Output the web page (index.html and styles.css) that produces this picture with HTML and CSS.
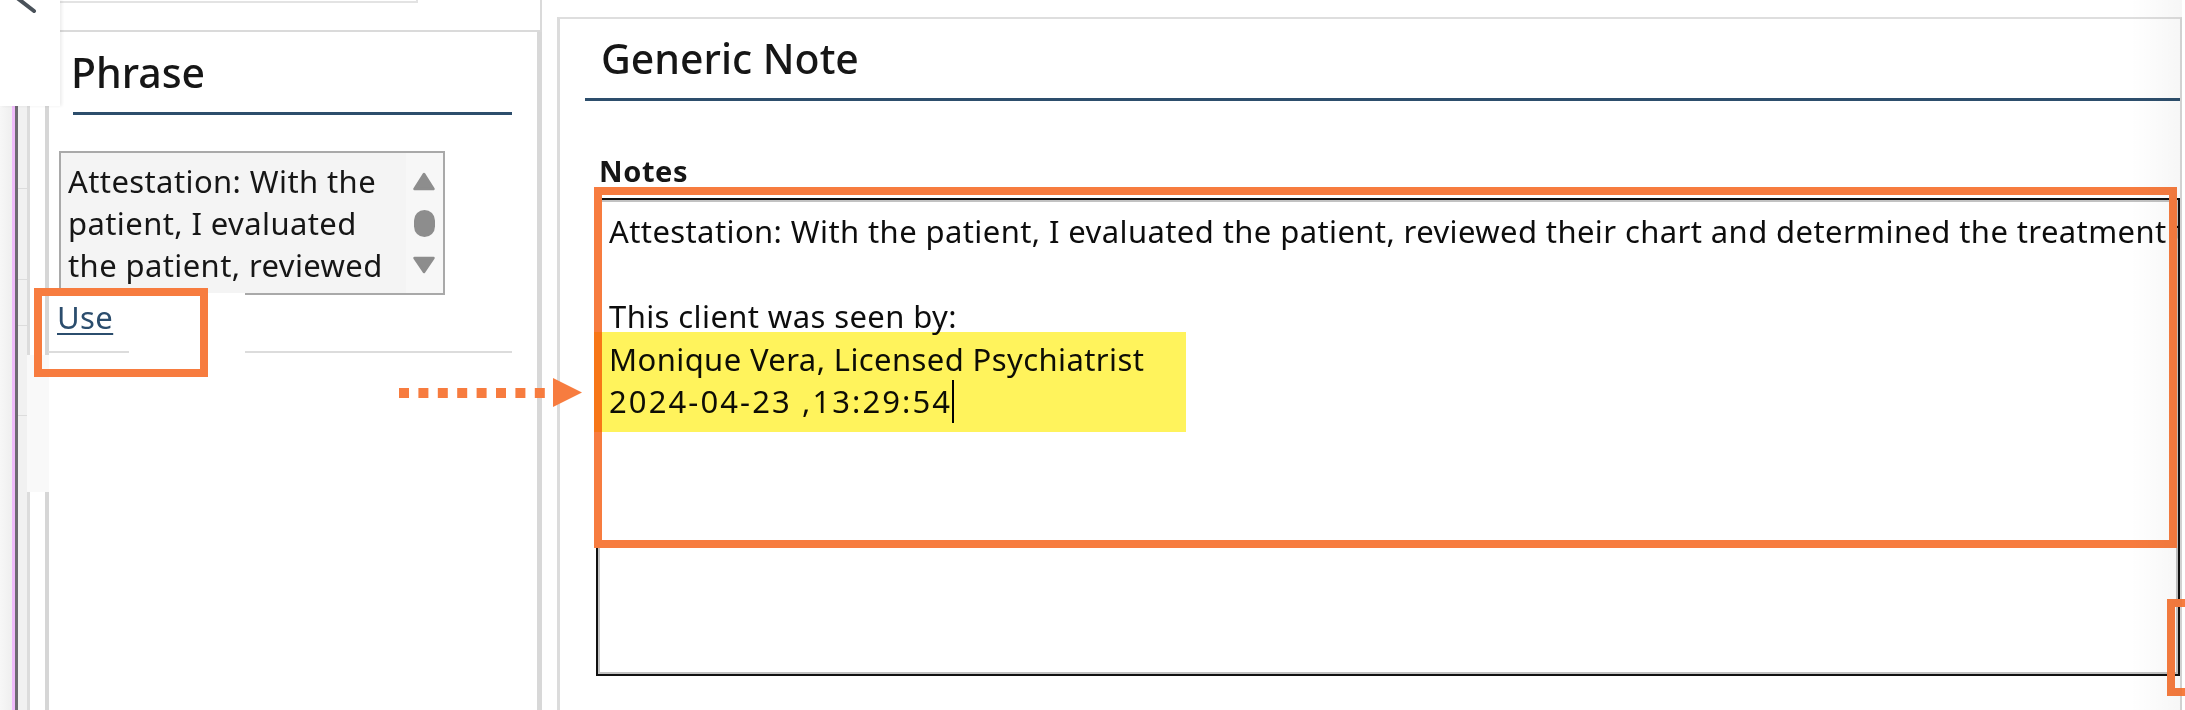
FILE: index.html
```html
<!DOCTYPE html>
<html lang="en">
<head>
<meta charset="utf-8">
<title>Generic Note</title>
<link rel="stylesheet" href="styles.css">
</head>
<body>
<div class="app">
  <div class="rail">
    <div class="rail-cell c1"></div>
    <div class="rail-cell c2"></div>
    <div class="rail-cell c3"></div>
    <div class="rail-cell c4"></div>
    <div class="rail-cell c5"></div>
  </div>
  <aside class="sidebar">
    <div class="topstrip"><div class="topbox"></div></div>
    <div class="phrase-panel">
      <div class="gutter">
        <div class="gut gut-a"></div>
        <div class="gut gut-b"></div>
        <div class="gut gut-c"></div>
      </div>
      <div class="phrase-content">
        <h2 class="phrase-title">Phrase</h2>
        <div class="phrase-box">
          <div class="phrase-text">Attestation: With the patient, I evaluated the patient, reviewed their chart and determined the treatment</div>
          <div class="phrase-scroll">
            <svg width="37" height="140" viewBox="0 0 37 140">
              <path d="M18 21 L27.5 36 L8.5 36 Z" fill="#8d8d8d" stroke="#8d8d8d" stroke-width="2.5" stroke-linejoin="round"/>
              <rect x="8" y="57" width="21" height="27" rx="10.5" fill="#8d8d8d"/>
              <path d="M8.5 105 L27.5 105 L18 119 Z" fill="#8d8d8d" stroke="#8d8d8d" stroke-width="2.5" stroke-linejoin="round"/>
            </svg>
          </div>
        </div>
        <div class="phrase-actions"><a class="use-link" href="#">Use</a></div>
      </div>
    </div>
  </aside>
  <main class="note-panel">
    <h1 class="note-title">Generic Note</h1>
    <label class="notes-label">Notes</label>
    <div class="notes-box">
      <div class="ln">Attestation: With the patient, I evaluated the patient, reviewed their chart and determined the treatment to be appropriate.</div>
      <div class="ln"></div>
      <div class="ln">This client was seen by:</div>
      <div class="ln">Monique Vera, Licensed Psychiatrist</div>
      <div class="ln"><span class="ts">2024-04-23 ,13:29:54</span><span class="caret"></span></div>
    </div>
  </main>
</div>

<div class="collapse-btn">
  <svg width="60" height="106" viewBox="0 0 60 106">
    <path d="M12 -6 L34 11" stroke="#4a525a" stroke-width="4" stroke-linecap="round" fill="none"/>
  </svg>
</div>
<div class="mask"></div>
<div class="anno anno-use"></div>
<div class="anno anno-notes"></div>
<div class="anno anno-corner"></div>
<svg class="arrow" width="184" height="30" viewBox="0 0 184 30">
  <g fill="#f77c3f">
    <rect x="0" y="10" width="10" height="10"/>
    <rect x="19.4" y="10" width="10" height="10"/>
    <rect x="38.8" y="10" width="10" height="10"/>
    <rect x="58.2" y="10" width="10" height="10"/>
    <rect x="77.6" y="10" width="10" height="10"/>
    <rect x="97" y="10" width="10" height="10"/>
    <rect x="116.4" y="10" width="10" height="10"/>
    <rect x="135.8" y="10" width="10" height="10"/>
    <path d="M154 0 L183 14.5 L154 29 Z"/>
  </g>
</svg>
<div class="hl"></div>
<div class="edge-shade"></div>
</body>
</html>
```

FILE: styles.css
```css
* { box-sizing: border-box; }

body {
  margin: 0;
  width: 2185px;
  height: 710px;
  overflow: hidden;
  background: #fff;
  position: relative;
  font-family: "Noto Sans", "Open Sans", sans-serif;
  color: #161616;
}

.app {
  display: flex;
  height: 710px;
}

/* left rail */
.rail {
  width: 27px;
  flex: none;
  display: flex;
  flex-direction: column;
  background: linear-gradient(to right, #f7f7f7 0, #efefef 12px, #efbafb 12px, #efbafb 15px, #6e6a72 15px, #6e6a72 18px, #f1f1f1 18px);
}
.rail-cell { margin-left: 18px; border-top: 1px solid #dcdcdc; }
.c1 { height: 188px; border-top: 0; }
.c2 { height: 91px; }
.c3 { height: 46px; }
.c4 { height: 90px; }
.c5 { flex: 1; }

/* sidebar */
.sidebar {
  width: 515px;
  flex: none;
  display: flex;
  flex-direction: column;
}
.topstrip {
  height: 32px;
  flex: none;
  border-bottom: 2px solid #dadada;
  border-right: 2px solid #dadada;
}
.topbox {
  width: 391px;
  height: 3px;
  border-bottom: 2px solid #e3e3e3;
  border-right: 2px solid #e3e3e3;
}
.phrase-panel {
  flex: 1;
  display: flex;
  border-right: 5px solid #d8d8d8;
}
.gutter {
  width: 22px;
  flex: none;
  display: flex;
  flex-direction: column;
}
.gut {
  border-left: 3px solid #dcdcdc;
  border-right: 4px solid #d6d6d6;
  background: #fff;
}
.gut-a { height: 323px; }
.gut-b { height: 137px; background: #f9f9f9; border-color: transparent; }
.gut-c { flex: 1; }

.phrase-content {
  flex: 1;
  min-width: 0;
  padding-top: 15px;
}
.phrase-title {
  margin: 0 25px 0 24px;
  font-size: 41px;
  font-weight: 500;
  line-height: 50px;
  padding-bottom: 15px;
  border-bottom: 3px solid #2d4e6c;
  text-indent: -2px;
}
.phrase-box {
  margin: 36px 0 0 10px;
  width: 386px;
  height: 144px;
  border: 2px solid #a9a9a9;
  background: #f4f4f4;
  display: flex;
}
.phrase-text {
  flex: 1;
  min-width: 0;
  padding: 7px 0 0 7px;
  font-size: 31px;
  line-height: 42px;
  letter-spacing: 0.4px;
  overflow: hidden;
}
.phrase-scroll {
  width: 37px;
  flex: none;
  background: #f7f7f7;
}
.phrase-scroll svg { display: block; }

.phrase-actions {
  margin: 0 25px 0 -1px;
  padding: 1px 0 13px 9px;
  border-bottom: 2px solid #dcdcdc;
  font-size: 31px;
  line-height: 42px;
}
.use-link {
  color: #2b4d6d;
  letter-spacing: 0.4px;
  text-decoration: underline;
  text-decoration-thickness: 2px;
  text-underline-offset: 4px;
}

/* note panel */
.note-panel {
  flex: 1;
  min-width: 0;
  margin: 17px 3px 0 15px;
  border-top: 2px solid #dedede;
  border-left: 3px solid #dcdcdc;
  border-right: 2px solid #d8d8d8;
  padding: 14px 0 0 25px;
}
.note-title {
  margin: 0;
  font-size: 41px;
  font-weight: 500;
  line-height: 50px;
  padding: 0 0 15px 16px;
  border-bottom: 3px solid #2d4e6c;
}
.notes-label {
  display: block;
  margin: 52px 0 0 14px;
  font-size: 29px;
  font-weight: 700;
  line-height: 36px;
  letter-spacing: 0.6px;
}
.notes-box {
  margin: 9px 0 0 11px;
  height: 478px;
  border: 2px solid #111;
  box-shadow: inset 0 0 0 2px #c2c2c2;
  padding: 10px 0 0 11px;
  font-size: 31px;
  line-height: 42.5px;
  letter-spacing: 0.4px;
  color: #0d0d0d;
  overflow: hidden;
  background: #fff;
}
.ln {
  height: 42.5px;
  white-space: nowrap;
}
.ts { letter-spacing: 2.1px; }
.caret {
  display: inline-block;
  width: 2px;
  height: 43px;
  background: #000;
  vertical-align: top;
}

/* overlays */
.collapse-btn {
  position: absolute;
  left: 0;
  top: 0;
  width: 60px;
  height: 106px;
  background: #fff;
  box-shadow: 2px 0 3px rgba(0, 0, 0, 0.07);
}
.collapse-btn svg { display: block; }
.mask {
  position: absolute;
  left: 129px;
  top: 293px;
  width: 116px;
  height: 63px;
  background: #fff;
}
.anno {
  position: absolute;
  border: 8px solid #f77c3f;
}
.anno-use { left: 34px; top: 288px; width: 174px; height: 89px; }
.anno-notes { left: 594px; top: 187px; width: 1583px; height: 361px; }
.anno-corner { left: 2167px; top: 599px; width: 40px; height: 97px; }
.arrow { position: absolute; left: 399px; top: 378px; }
.hl {
  position: absolute;
  left: 594px;
  top: 332px;
  width: 592px;
  height: 100px;
  background: #fff35c;
  mix-blend-mode: multiply;
}
.edge-shade {
  position: absolute;
  left: 2130px;
  top: 0;
  width: 52px;
  height: 710px;
  background: linear-gradient(to right, rgba(0, 0, 0, 0), rgba(0, 0, 0, 0.035));
  pointer-events: none;
}
```
